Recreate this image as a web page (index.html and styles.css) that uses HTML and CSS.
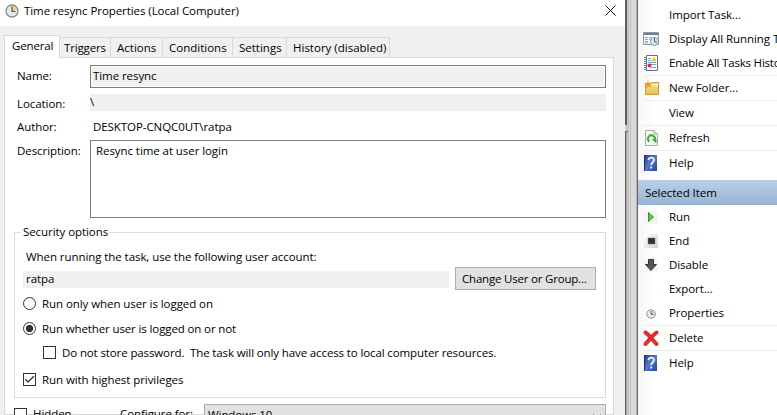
FILE: index.html
```html
<!DOCTYPE html>
<html lang="en">
<head>
<meta charset="utf-8">
<title>Time resync Properties (Local Computer)</title>
<link rel="stylesheet" href="styles.css">
</head>
<body>
<svg class="defs" width="0" height="0">
  <defs>
    <linearGradient id="blue" x2="1" y2="1"><stop offset="0" stop-color="#1d3a96"/><stop offset=".5" stop-color="#5878cc"/><stop offset="1" stop-color="#2444a0"/></linearGradient>
    <linearGradient id="grey" x2="1" y2="1"><stop offset="0" stop-color="#fff"/><stop offset="1" stop-color="#d4d4d4"/></linearGradient>
    <linearGradient id="gold" y2="1" x2="0"><stop offset="0" stop-color="#fae6a0"/><stop offset="1" stop-color="#e8bd50"/></linearGradient>
    <symbol id="clock" viewBox="0 0 14 14"><circle cx="7" cy="7" r="6" fill="#e4e9f0" stroke="#858b91" stroke-width="1.3"/><path d="M7 7V2a5 5 0 0 1 5 5z" fill="#f4cf75"/><path d="M7 2.8V7.5H10.5" fill="none" stroke="#46566b" stroke-width="1.2"/></symbol>
    <symbol id="help" viewBox="0 0 16 16"><path d="M1 0H14V16H1z" fill="url(#blue)"/><path d="M1.5 0V16" stroke="#182c70"/><path d="M5.5 5.2C5.5 1.8 11 1.8 11 5.1C11 7.6 8.2 7.4 8.2 10M8.2 11.5V13.6" fill="none" stroke="#e9efff" stroke-width="1.9"/></symbol>
  </defs>
</svg>
<div class="screen">
  <section class="dialog">
    <header class="title">
      <svg class="title-icon" width="14" height="14"><use href="#clock"/></svg>
      <span>Time resync Properties (Local Computer)</span>
      <svg class="close" width="11" height="11" viewBox="0 0 11 11"><path d="M.5 .5L10.5 10.5M10.5 .5L.5 10.5" stroke="#111" fill="none"/></svg>
    </header>
    <nav class="tabs">
      <div class="tab active">General</div>
      <div class="tab triggers">Triggers</div>
      <div class="tab actions">Actions</div>
      <div class="tab conditions">Conditions</div>
      <div class="tab settings">Settings</div>
      <div class="tab history">History (disabled)</div>
    </nav>
    <main class="page">
      <div class="field name"><label>Name:</label><div class="input">Time resync</div></div>
      <div class="field location"><label>Location:</label><div class="flat">\</div></div>
      <div class="field author"><label>Author:</label><span class="plain">DESKTOP-CNQC0UT\ratpa</span></div>
      <div class="field desc"><label>Description:</label><div class="area">Resync time at user login</div></div>
      <fieldset class="security">
        <legend>Security options</legend>
        <p class="prompt">When running the task, use the following user account:</p>
        <div class="account"><div class="user">ratpa</div><div class="button">Change User or Group...</div></div>
        <div class="option only"><i class="radio"></i><span>Run only when user is logged on</span></div>
        <div class="option whether"><i class="radio on"></i><span>Run whether user is logged on or not</span></div>
        <div class="option store"><i class="check"></i><span>Do not store password.&nbsp; The task will only have access to local computer resources.</span></div>
        <div class="option highest"><i class="check"><svg width="11" height="11" viewBox="0 0 11 11"><path d="M1.3 5.3L4 8L9.8 2.2" fill="none" stroke="#333" stroke-width="1.3"/></svg></i><span>Run with highest privileges</span></div>
      </fieldset>
      <div class="bottom"><i class="check"></i><span class="hidden-label">Hidden</span><span class="configure">Configure for:</span><div class="select"><span>Windows 10</span><svg width="10" height="6" viewBox="0 0 10 6"><path d="M1 .7L5 4.7L9 .7" fill="none" stroke="#555" stroke-width="1.2"/></svg></div></div>
    </main>
  </section>
  <div class="splitter"><div class="shade"></div><div class="gap"></div><div class="notch"></div></div>
  <aside class="panel">
    <div class="item first"><i class="icon"></i><span>Import Task...</span></div>
    <div class="item"><i class="icon"><svg width="16" height="16" viewBox="0 0 16 16"><path d="M.5 1.5H15.5V13.5H.5z" fill="#f8fafb" stroke="#8c98a4"/><path d="M1 3H15" stroke="#6d8299" stroke-width="2"/><path d="M2 6.5H5M6 6.5H9M2 8.5H5M6 8.5H8M2 10.5H5M2 12H5" stroke="#94a3b1"/><circle cx="11.5" cy="10.5" r="4" fill="#dce9f2" stroke="#8997a2"/><path d="M11.5 7V11H14" fill="none" stroke="#48677f"/></svg></i><span>Display All Running Tasks</span></div>
    <div class="item"><i class="icon"><svg width="16" height="16" viewBox="0 0 16 16"><path d="M3.5 .5H14.5V15.5H3.5z" fill="#fff" stroke="#576daa"/><path d="M1 2.5H4M1 4.5H4M1 6.5H4M1 8.5H4M1 10.5H4M1 12.5H4M1 14.5H4" stroke="#777"/><path d="M5 3.5H8M5 5.5H8M5 7.5H13M8 9.5H13M8 12.5H13" stroke="#69a7d4"/><path d="M11 1.5L14 6.5H8z" fill="#f4cf20"/><circle cx="6.5" cy="10.5" r="2" fill="#dc3038"/></svg></i><span class="enable">Enable All Tasks History</span></div>
    <div class="item sep"><i class="icon"><svg width="16" height="16" viewBox="0 0 16 16"><path d="M2.5 4H8L9 2.5H15.5V14.5H2.5z" fill="url(#gold)" stroke="#c99d42"/><path d="M8.5 5H15" stroke="#fff5ca"/><path d="M5 0L6 3L9 2.5L7 5L9 8L5.5 6.5L3 8L3.5 5L1 3L4 3z" fill="#f59a17"/></svg></i><span>New Folder...</span></div>
    <div class="item sep"><i class="icon"></i><span>View</span></div>
    <div class="item sep"><i class="icon"><svg width="16" height="16" viewBox="0 0 16 16"><path d="M2.5 .5H11L14.5 4V15.5H2.5z" fill="#f6f6f6" stroke="#aaa"/><path d="M11 .5V4H14.5" fill="#ddd" stroke="#aaa"/><path d="M6.3 11.6A3.5 3.5 0 1 1 11.5 10.5" fill="none" stroke="#35b934" stroke-width="2"/><path d="M8.5 9H13.5V13.5z" fill="#35b934"/></svg></i><span>Refresh</span></div>
    <div class="item sep"><i class="icon"><svg width="16" height="16"><use href="#help"/></svg></i><span>Help</span></div>
    <div class="heading">Selected Item</div>
    <div class="item"><i class="icon"><svg width="16" height="16" viewBox="0 0 16 16"><path d="M1 1H15V15H1z" fill="#f5f5f5"/><path d="M5.5 3.5L10.5 8L5.5 12.5z" fill="#55d339" stroke="#279a20"/></svg></i><span>Run</span></div>
    <div class="item"><i class="icon"><svg width="16" height="16" viewBox="0 0 16 16"><path d="M1 1H15V15H1z" fill="url(#grey)"/><path d="M5 5H12V11H5z" fill="#333" stroke="#777" stroke-width=".5"/></svg></i><span>End</span></div>
    <div class="item"><i class="icon"><svg width="16" height="16" viewBox="0 0 16 16"><path d="M1 1H15V15H1z" fill="#f5f5f5"/><path d="M5.5 2.5H10.5V7.5H13.5L8 13.5L2.5 7.5H5.5z" fill="#555" stroke="#333"/></svg></i><span>Disable</span></div>
    <div class="item"><i class="icon"></i><span>Export...</span></div>
    <div class="item"><i class="icon"><svg class="small-clock" width="10" height="10"><use href="#clock"/></svg></i><span>Properties</span></div>
    <div class="item sep"><i class="icon"><svg width="16" height="16" viewBox="0 0 16 16"><path d="M2.5 2.5Q5 4 8 8L13.5 14M13.5 2.5Q9 6 7.5 8.5Q5 11 2.5 14" fill="none" stroke="#b94040" stroke-width="4" stroke-linecap="round"/><path d="M2.5 2.5Q5 4 8 8L13.5 14M13.5 2.5Q9 6 7.5 8.5Q5 11 2.5 14" fill="none" stroke="#ec2926" stroke-width="2.8" stroke-linecap="round"/></svg></i><span>Delete</span></div>
    <div class="item sep"><i class="icon"><svg width="16" height="16"><use href="#help"/></svg></i><span>Help</span></div>
  </aside>
</div>
</body>
</html>
```
FILE: styles.css
```css
* { box-sizing: border-box; }
body { margin: 0; overflow: hidden; font: 11.5px/16px "Open Sans", "Noto Sans", sans-serif; letter-spacing: -.07px; color: #000; white-space: nowrap; }
.defs { position: absolute; }
.screen { display: flex; width: 777px; height: 415px; overflow: hidden; background: #fff; }
.dialog { flex: 0 0 625px; height: 415px; background: #f0f0f0; overflow: hidden; }
.title { height: 26px; background: #fff; display: flex; align-items: flex-start; padding: 3px 9px 0 5px; }
.title-icon { margin: 1px 5px 0 0; }
.close { margin: 2px 0 0 auto; }
.tabs { display: flex; align-items: flex-end; height: 31px; padding-left: 4px; }
.tab { height: 20px; border: 1px solid #d9d9d9; border-left: 0; border-bottom: 0; padding-top: 2px; padding-left: 4px; letter-spacing: 0; }
.tab.active { width: 56px; height: 23px; margin-bottom: -1px; border-left: 1px solid #d9d9d9; background: #fff; padding-left: 7px; letter-spacing: -.15px; position: relative; }
.triggers { width: 51px; letter-spacing: -.15px; }
.actions { width: 52px; padding-left: 6px; }
.conditions { width: 70px; padding-left: 6px; }
.settings { width: 54px; padding-left: 6px; }
.history { width: 103px; padding-left: 6px; }
.page { width: 610px; height: 358px; margin-left: 4px; background: #fff; border: 1px solid #d9d9d9; padding: 7px 7px 0 9px; }
.field { display: grid; grid-template-columns: 73px 516px; padding-left: 3px; }
.name { height: 29px; }
.name label { padding-top: 3px; }
.input { height: 23px; border: 1px solid #7a7a7a; background: #f0f0f0; box-shadow: inset 0 0 0 1px #fff; padding: 2px 0 0 2px; }
.location { height: 25px; }
.location label { padding-top: 2px; }
.flat { height: 17px; background: #f0f0f0; }
.author { height: 21px; }
.plain { padding-left: 3px; }
.desc { height: 84px; }
.desc label { padding-top: 3px; }
.area { height: 78px; border: 1px solid #7a7a7a; padding: 2px 5px; }
.security { width: 592px; height: 174px; border: 1px solid #dcdcdc; margin: 0; padding: 0; }
legend { height: 16px; margin-left: 6px; padding: 0 2px; }
.prompt { margin: 9px 0 2px 11px; }
.account { display: flex; margin-left: 8px; height: 24px; align-items: flex-start; }
.user { width: 426px; height: 17px; background: #f0f0f0; margin-top: 4px; padding-left: 3px; }
.button { width: 141px; height: 23px; margin-left: 6px; border: 1px solid #adadad; background: #e1e1e1; padding: 3px 6px; letter-spacing: -.2px; }
.option { height: 16px; display: flex; align-items: flex-start; margin-left: 8px; gap: 6px; }
.radio, .check { flex: 0 0 13px; height: 13px; margin-top: 1px; border: 1px solid #333; display: block; background: #fff; }
.radio { border-radius: 50%; }
.radio.on { background: radial-gradient(circle, #333 0 3.3px, #fff 4px); }
.check svg { display: block; }
.only { margin-top: 5px; }
.whether { margin-top: 9px; letter-spacing: -.12px; }
.store { margin: 8px 0 0 28px; letter-spacing: -.12px; }
.highest { margin-top: 11px; }
.bottom { display: flex; align-items: flex-start; margin-top: 6px; height: 23px; }
.bottom .check { margin-top: 4px; }
.hidden-label { margin: 2px 0 0 6px; width: 38px; }
.configure { margin: 2px 0 0 49px; width: 84px; }
.select { width: 402px; height: 23px; border: 1px solid #adadad; background: #e1e1e1; display: flex; justify-content: space-between; padding: 2px 3px; }
.select svg { margin-top: 7px; }
.splitter { flex: 0 0 13px; background: linear-gradient(90deg, #5f5f5f 0 1px, #aaa 1px 2px, #c1c1c1 2px 4px, #d8d8d8 4px 5px, #c1c1c1 5px 6px, #d9d9d9 6px 11px, #b5b5b5 11px 12px, #666 12px 13px); }
.shade { width: 2px; height: 125px; background: #5f5f5f; }
.gap { width: 2px; height: 6px; background: #cfcfcf; }
.notch { width: 3px; height: 1px; background: #5f5f5f; }
.panel { flex: 1; overflow: hidden; background: linear-gradient(90deg, #f6f6f6, #fff 16px); }
.item { height: 24px; display: flex; align-items: flex-start; padding: 4px 0 0 5px; overflow: hidden; }
.item.first { height: 27px; padding-top: 7px; }
.item.sep { height: 25px; padding-top: 5px; position: relative; }
.item.sep::before { content: ""; position: absolute; top: 0; left: 5px; right: 0; height: 1px; background: #ececec; }
.enable { letter-spacing: -.2px; }
.icon { flex: 0 0 16px; height: 16px; margin-right: 10px; }
.icon svg { display: block; }
.icon .small-clock { margin: 4px 3px; }
.heading { height: 25px; margin-top: 5px; background: linear-gradient(#bad0e8, #98b3d2); padding: 5px 7px; }
```
